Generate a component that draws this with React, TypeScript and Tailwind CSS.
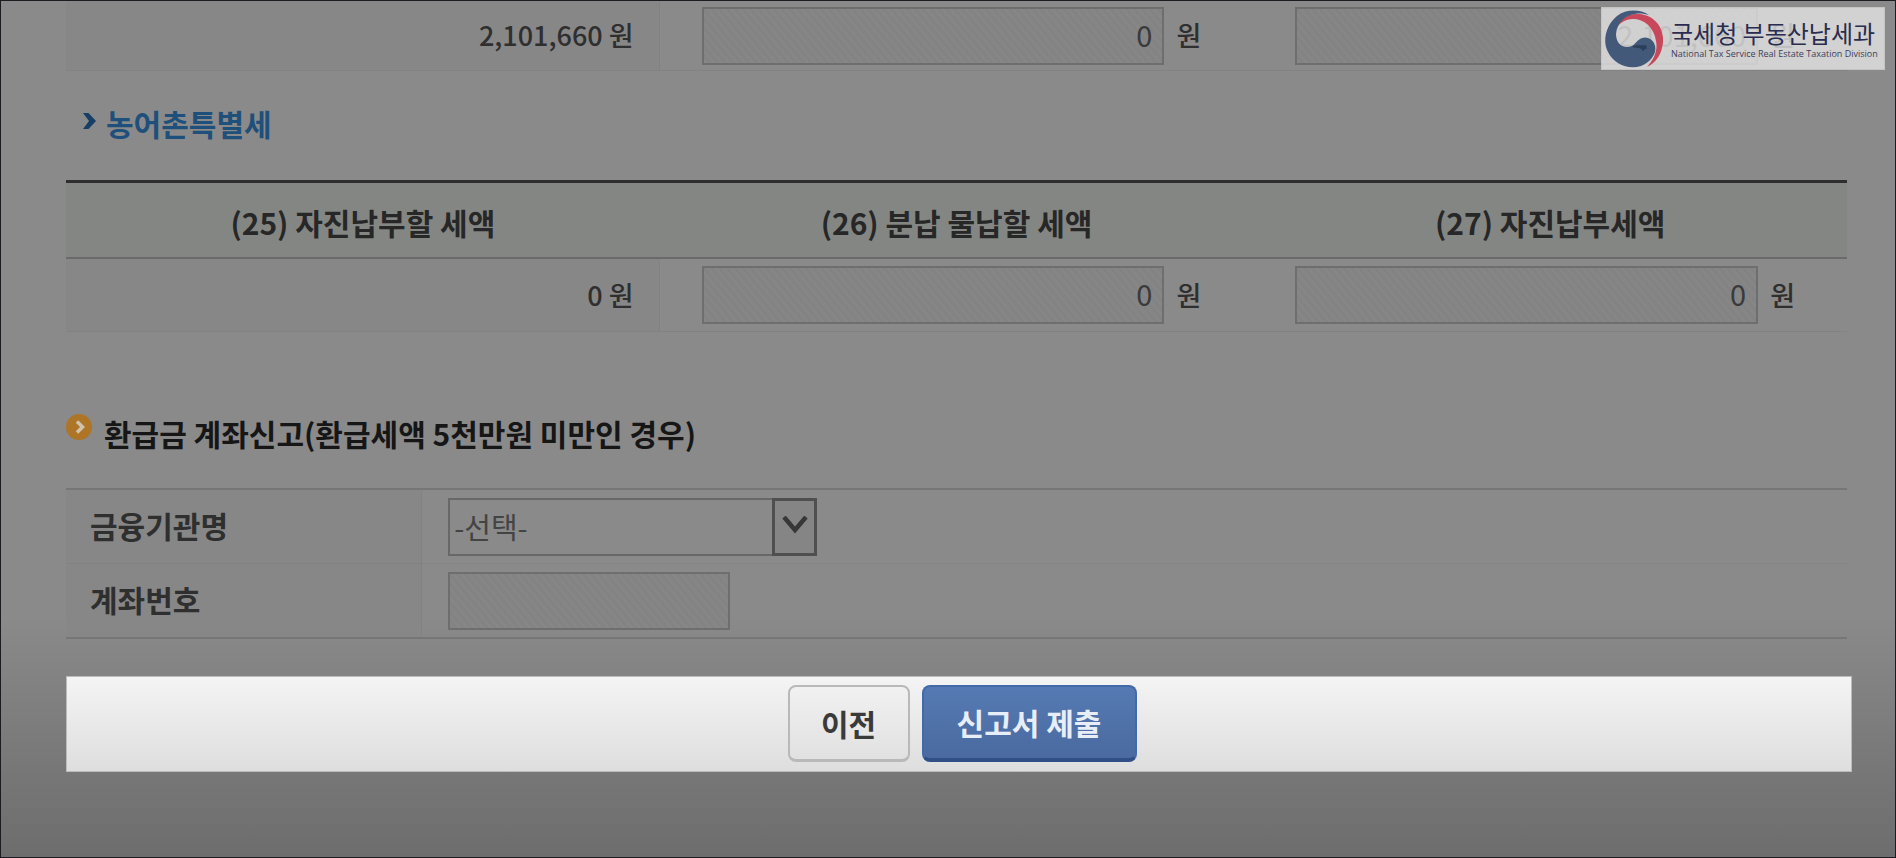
import React from "react";

const hatch =
  "bg-[repeating-linear-gradient(50deg,#868686_0px,#868686_3px,#838383_3px,#838383_6px)]";

function AmountCell({ label, value }: { label: string; value: string }) {
  return (
    <td className="border-b border-[#828282] p-0 pl-[42px] pr-[52px]">
      <label className="flex items-center gap-3">
        <input
          type="text"
          readOnly
          aria-label={label}
          defaultValue={value}
          className={`h-[58px] min-w-0 flex-1 border-2 border-[#6e6e6e] px-[10px] pb-1 text-right text-[29px] text-[#3a3a3a] outline-none ${hatch}`}
        />
        <span className="text-[27px] font-medium">원</span>
      </label>
    </td>
  );
}

function TotalCell({ value }: { value: string }) {
  return (
    <td className="border-b border-r border-[#828282] bg-[#878787] p-0 pr-[25px] text-right text-[27px] font-medium">
      {value} 원
    </td>
  );
}

function HeaderCell({ children }: { children: React.ReactNode }) {
  return (
    <th className="border-b-2 border-t-[3px] border-b-[#6a6a6a] border-t-[#2e2e2e] p-0 pt-1 font-bold">
      {children}
    </th>
  );
}

function TaxOfficeLogo() {
  return (
    <div className="absolute right-[10px] top-[6px] flex h-[63px] w-[284px] items-center gap-2 border border-[#c4c4c4] bg-[#e4e4e4]/80 pl-[3px]">
      <svg viewBox="0 0 58 58" className="h-[58px] w-[58px] shrink-0" aria-hidden="true">
        <path
          d="M10 20C13 9 23 3 34 4C49 5 59 17 58 32C57 44 51 53 42 57C49 49 53 41 51 31C49 17 39 9 28 9C20 9 14 13 10 20Z"
          fill="#c8475a"
        />
        <path
          d="M44 5C35 -1 21 -1 12 6C1 15 -3 31 3 42C9 54 23 60 36 56C46 52 52 43 50 36C49 30 43 26 37 28C31 30 30 37 22 37C15 37 11 31 11 24C12 13 20 5 30 4C35 3 40 4 44 5Z"
          fill="#43597a"
        />
        <path d="M27 37C31 34 36 36 41 35L42 39C38 38 40 42 38 41C36 37 31 38 27 37Z" fill="#2b3f5b" />
      </svg>
      <div className="flex flex-col whitespace-nowrap text-[#2a2c50]">
        <span className="text-[24px] leading-[29px]">국세청 부동산납세과</span>
        <span className="font-['Open_Sans',sans-serif] text-[9px] leading-[13px] text-[#3c3e5c]">
          National Tax Service Real Estate Taxation Division
        </span>
      </div>
    </div>
  );
}

export default function App() {
  return (
    <div className="relative min-h-screen border border-[#1c1b20] bg-[linear-gradient(to_bottom,#8a8a8a_0,#8a8a8a_72%,#777777_90%,#6d6d6d_100%)] pb-[85px] pl-[65px] pr-[43px] font-['Noto_Sans_CJK_KR',sans-serif] text-[#2f2f2f]">
      <main>
        <div className="pr-[5px]">
          <table className="w-full table-fixed border-separate border-spacing-0">
            <tbody>
              <tr className="h-[70px]">
                <TotalCell value="2,101,660" />
                <AmountCell label="분납 물납할 세액" value="0" />
                <AmountCell label="자진납부세액" value="2,101,660" />
              </tr>
            </tbody>
          </table>

          <h3 className="flex h-[109px] items-center gap-[10px] pl-4 pb-1.5 text-[30px] font-bold leading-9 text-[#1f4f7b]">
            <svg viewBox="0 0 14 16" className="mb-1 h-4 w-[14px]" aria-hidden="true">
              <path d="M1 0H6.500L14 8L6.500 16H1L7 8Z" fill="#173f66" />
            </svg>
            농어촌특별세
          </h3>

          <table className="w-full table-fixed border-separate border-spacing-0">
            <thead>
              <tr className="h-[79px] bg-[#848683] text-[30px] text-[#272727]">
                <HeaderCell>(25) 자진납부할 세액</HeaderCell>
                <HeaderCell>(26) 분납 물납할 세액</HeaderCell>
                <HeaderCell>(27) 자진납부세액</HeaderCell>
              </tr>
            </thead>
            <tbody>
              <tr className="h-[73px]">
                <TotalCell value="0" />
                <AmountCell label="(26) 분납 물납할 세액" value="0" />
                <AmountCell label="(27) 자진납부세액" value="0" />
              </tr>
            </tbody>
          </table>

          <h2 className="flex h-[156px] items-center gap-[10px] pt-[46px] text-[30px] font-bold leading-9 text-[#161616]">
            <svg viewBox="0 0 28 28" className="mb-3 h-7 w-7 shrink-0" aria-hidden="true">
              <circle cx="13" cy="14" r="13" fill="#ae7526" />
              <path d="M11 8.500L16.500 14L11 19.500" fill="none" stroke="#cfc3ae" strokeWidth="3.500" />
            </svg>
            환급금 계좌신고(환급세액 5천만원 미만인 경우)
          </h2>

          <table className="w-full table-fixed border-separate border-spacing-0 border-y-2 border-[#767676]">
            <colgroup>
              <col className="w-[20%]" />
              <col />
            </colgroup>
            <tbody>
              <tr className="h-[74px]">
                <th className="border-b border-r border-[#828282] bg-[#878787] p-0 pb-0.5 pl-6 text-left text-[30px] font-bold">
                  <label htmlFor="bank">금융기관명</label>
                </th>
                <td className="border-b border-[#848484] p-0 pl-[26px]">
                  <div className="relative h-[58px] w-[369px]">
                    <select
                      id="bank"
                      className="h-full w-full appearance-none border-2 border-[#686868] bg-[#8a8a8a] pl-1 pr-12 text-[29px] text-[#444] outline-none"
                    >
                      <option>-선택-</option>
                    </select>
                    <span className="pointer-events-none absolute right-0 top-0 flex h-full w-[45px] items-center justify-center border-[3px] border-[#4f4f4f] bg-[#858585]">
                      <svg viewBox="0 0 28 18" className="mb-1 h-[18px] w-7" aria-hidden="true">
                        <path d="M3 1L14 14L25 1" fill="none" stroke="#373737" strokeWidth="4.500" />
                      </svg>
                    </span>
                  </div>
                </td>
              </tr>
              <tr className="h-[73px]">
                <th className="border-r border-[#828282] bg-[#878787] p-0 pb-0.5 pl-6 text-left text-[30px] font-bold">
                  <label htmlFor="account">계좌번호</label>
                </th>
                <td className="p-0 pl-[26px]">
                  <input
                    id="account"
                    type="text"
                    className={`block h-[58px] w-[282px] border-2 border-[#6e6e6e] px-2 text-[27px] outline-none ${hatch}`}
                  />
                </td>
              </tr>
            </tbody>
          </table>
        </div>

        <div className="mt-[37px] flex h-24 items-start justify-center gap-3 border border-[#bbb] bg-linear-to-b from-[#f4f4f4] to-[#dedede] pl-1.5 pt-2">
          <button
            type="button"
            className="h-[77px] w-[122px] rounded-lg border-2 border-b-[3px] border-[#b9b9b9] bg-linear-to-b from-[#f1f1f1] to-[#e1e1e1] text-[30px] font-bold text-[#3a3a3a]"
          >
            이전
          </button>
          <button
            type="button"
            className="h-[77px] w-[215px] rounded-lg border-2 border-b-4 border-[#4269a8] border-b-[#2f4f86] bg-linear-to-b from-[#557ab3] to-[#4a6aa0] text-[30px] font-bold text-[#e8eef8]"
          >
            신고서 제출
          </button>
        </div>
      </main>
      <TaxOfficeLogo />
    </div>
  );
}
